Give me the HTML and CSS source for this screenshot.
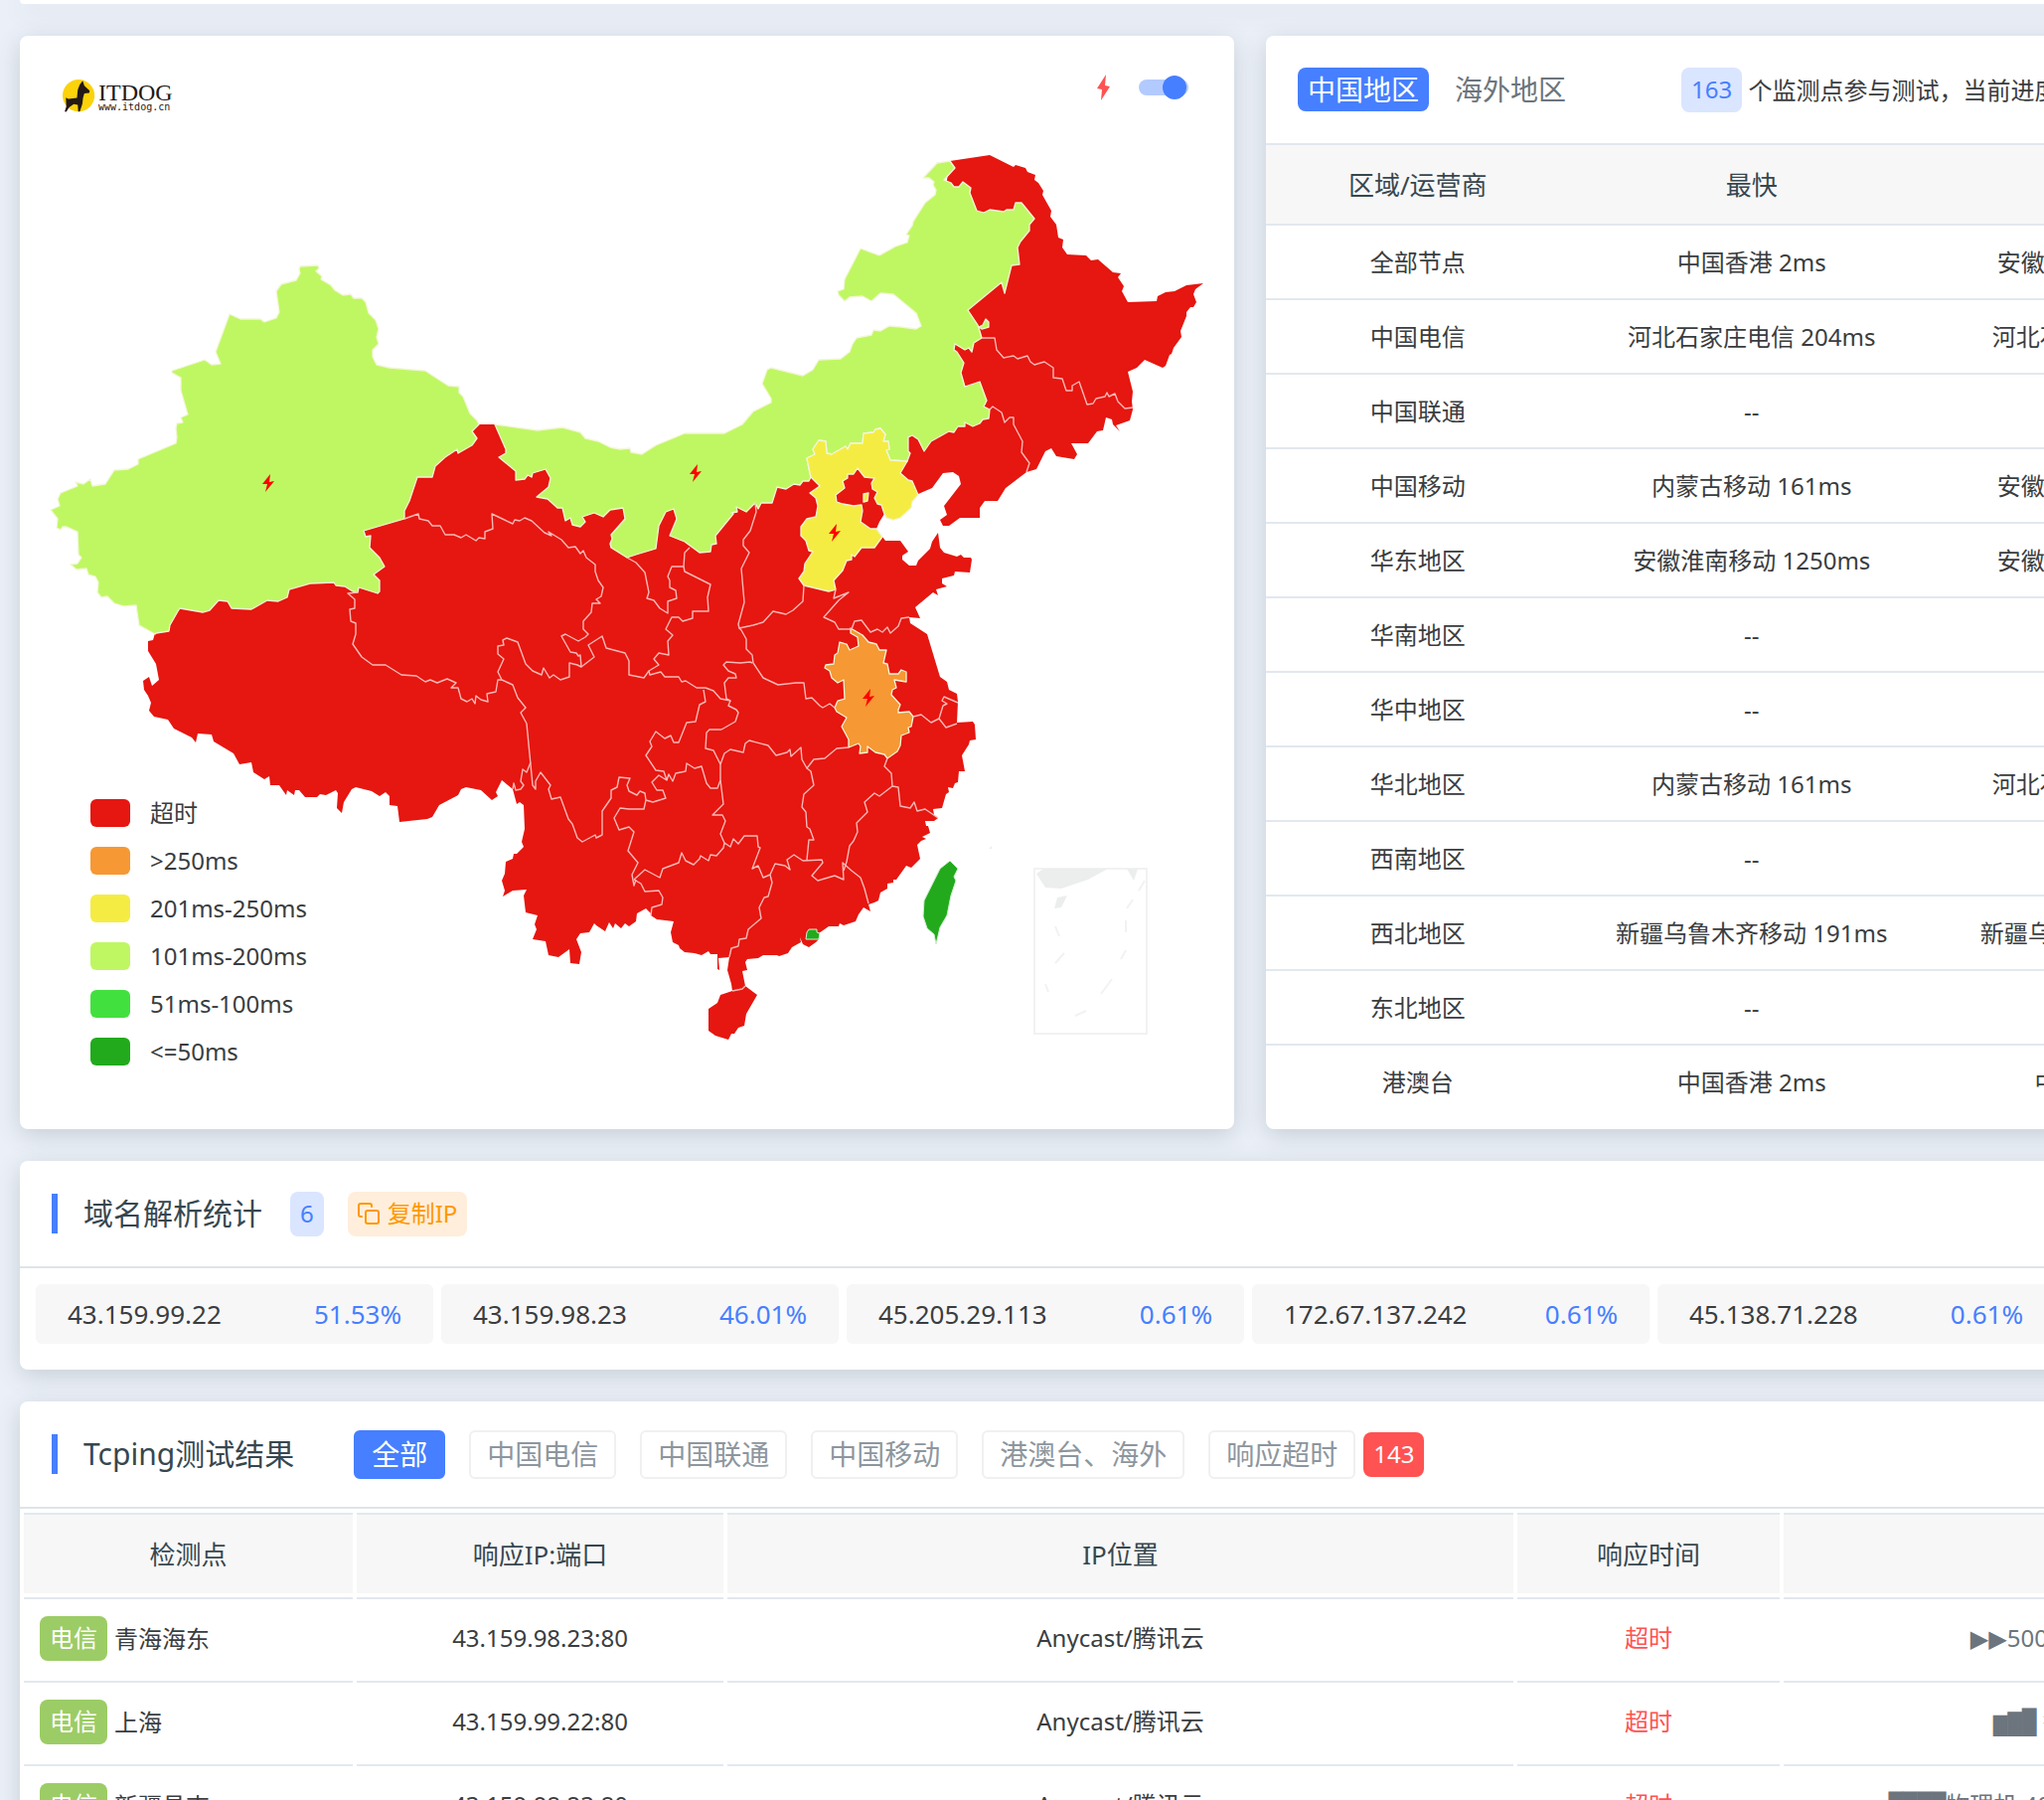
FILE: index.html
```html
<!DOCTYPE html>
<html lang="zh-CN">
  <head>
    <meta charset="UTF-8" />
    <meta name="viewport" content="width=device-width, initial-scale=1.0" />
    <title>Tcping测试 - ITDOG</title>
    <link rel="stylesheet" href="styles.css">
  </head>
  <body>
    <main class="page">
      <section class="card card-top"></section>

      <div class="overview">
        <section class="card map-card">
          <header class="map-head">
            <div class="logo">
              <svg class="logo-icon" viewBox="0 0 80 80">
                <circle cx="39" cy="39" r="39" fill="#fcd20a" />
                <path fill="#231815" d="M49 3 53 15 66 27 65 33 53 34 50 44 48 60 42 78 38 78 37 62 27 60 16 68 9 79 5 78 9 66 8 44 14 47 35 45 37 25 42 12z" />
              </svg>
              <div class="logo-text">
                <span class="logo-name">ITDOG</span>
                <span class="logo-url">www.itdog.cn</span>
              </div>
            </div>
            <label class="flash-switch">
              <svg class="flash-icon" viewBox="0 0 14 26"><path fill="#ff5252" d="M9 0 0 14 5 15 4 26 13 12 8 11z" /></svg>
              <input type="checkbox" aria-label="闪电" checked />
            </label>
          </header>

          <svg class="map" viewBox="20 136 1222 1000" role="img" aria-label="中国地区响应时间">
            <defs>
              <path id="bolt" fill="#ff0000" d="M2-9-6 1-1 1-3 9 6-2 1-1z" />
            </defs>

            <path class="p-red" d="M482 427 498 427 640 500 760 460 830 420 900 380 950 330 950 200 956 162 996 156 1020 168 1022 166 1032 169 1034 173 1042 176 1041 181 1045 184 1050 192 1049 196 1058 212 1057 218 1063 226 1065 239 1070 241 1069 249 1074 256 1093 257 1098 262 1105 261 1120 274 1128 275 1125 279 1131 288 1129 293 1135 304 1164 303 1165 298 1173 294 1182 293 1194 287 1211 285 1203 291 1201 296 1204 304 1201 309 1198 309 1194 314 1194 318 1188 333 1189 339 1181 350 1179 356 1177 357 1173 368 1170 370 1152 362 1144 370 1135 374 1140 394 1139 404 1140 412 1137 423 1123 428 1127 434 1120 427 1119 422 1113 420 1110 433 1104 434 1095 446 1078 446 1084 457 1081 462 1063 459 1058 451 1052 454 1043 472 1033 475 1012 491 1004 504 991 504 986 511 986 521 966 521 955 529 949 529 946 523 953 518 950 509 967 487 965 479 959 475 949 476 938 491 924 497 918 505 917 511 906 521 899 523 892 521 890 517 885 525 882 532 888 540 891 544 906 544 914 555 908 559 908 563 915 569 922 569 924 564 936 552 938 545 944 536 946 551 950 556 963 560 967 558 970 561 977 561 978 563 976 576 961 575 960 579 948 582 948 587 953 590 942 593 944 599 939 596 921 611 926 622 915 621 916 627 933 638 946 681 953 686 955 694 963 698 964 706 963 727 979 726 981 729 982 744 976 745 975 749 968 760 971 776 965 776 964 787 961 788 959 793 954 792 955 797 952 799 948 813 939 814 940 820 944 823 940 826 931 826 932 831 934 831 936 838 928 842 932 844 927 846 923 850 926 864 917 873 912 871 902 885 899 885 899 888 893 889 893 894 886 898 884 906 880 908 874 910 876 917 869 913 864 920 861 927 849 931 845 929 844 932 834 932 824 939 824 945 821 948 814 953 808 950 805 943 806 948 797 953 793 959 784 962 782 961 768 961 763 964 752 965 750 968 752 976 747 977 750 992 762 1001 751 1020 749 1032 743 1034 739 1040 736 1040 733 1046 720 1042 713 1037 713 1015 722 1009 725 1001 737 997 736 990 732 976 734 963 723 964 724 976 722 975 722 960 715 960 713 957 706 961 699 959 689 958 684 954 683 951 677 948 675 938 678 927 661 925 655 921 655 919 650 914 641 919 640 927 633 932 629 929 625 934 619 929 617 934 613 928 609 937 600 931 598 929 593 938 584 939 580 945 585 958 583 970 574 969 573 955 562 963 552 961 549 947 536 945 540 935 538 930 541 921 529 918 527 901 530 895 516 896 506 902 508 896 505 886 508 879 509 867 516 864 517 859 520 859 527 852 525 847 528 834 527 810 523 807 520 809 516 794 505 785 499 797 501 801 495 805 484 795 469 792 464 794 461 800 442 810 435 822 430 824 402 827 400 811 392 810 392 801 388 797 382 801 374 796 358 792 354 794 346 807 344 818 339 813 340 798 338 795 328 800 322 799 319 802 307 802 301 795 297 795 296 800 289 795 288 800 281 790 272 790 271 781 266 784 255 777 253 767 241 769 235 758 215 746 213 739 199 738 197 747 193 742 175 733 169 724 155 721 150 715 152 707 149 700 145 694 144 685 150 681 153 690 160 684 157 668 149 655 149 645 154 644 156 637 180 580 340 560 400 480 460 420z" />

            <!-- 新疆 -->
            <path class="p-lime" d="M482 427 480 423 473 416 466 399 462 395 462 389 451 388 428 373 392 370 379 367 375 359 375 352 381 346 379 339 381 331 378 322 371 315 368 304 364 300 356 300 353 296 345 297 337 292 333 287 323 281 324 278 318 273 321 270 320 267 302 268 301 271 302 275 298 282 283 286 278 293 281 314 278 320 266 324 262 321 242 321 231 316 217 354 222 366 213 367 206 362 173 373 173 375 182 380 182 393 189 417 182 420 184 425 178 426 177 431 178 440 177 446 139 462 139 467 129 472 115 473 106 487 93 489 91 482 84 487 76 485 78 489 61 496 58 502 60 509 51 513 58 522 57 531 61 533 63 530 67 530 78 535 79 558 82 561 78 567 71 568 77 573 87 572 89 578 96 580 99 586 98 596 102 601 108 600 115 607 125 610 137 609 140 629 156 638 157 637 170 635 171 629 179 615 181 612 204 616 211 614 220 604 229 605 233 612 253 613 269 604 280 605 289 601 291 593 312 587 336 586 338 589 347 590 355 595 360 596 361 591 380 597 382 595 382 584 376 578 387 570 382 561 372 551 373 539 368 540 366 534 407 522 407 514 412 504 420 480 435 480 438 469 448 460 460 452 461 456 475 448 480 441 475 434z" />

            <!-- 内蒙古 -->
            <path class="p-lime" d="M498 427 541 433 566 430 584 435 589 441 602 444 614 450 624 452 634 451 635 455 646 457 660 448 689 436 729 436 747 427 758 414 776 405 776 401 767 386 772 372 776 370 808 378 818 372 824 362 846 361 855 354 858 346 862 340 877 337 879 332 886 333 895 328 907 329 922 331 927 328 922 315 899 296 886 295 877 303 868 298 855 299 850 303 844 297 843 293 849 291 850 281 866 250 885 257 901 248 913 244 915 237 912 236 918 227 919 223 931 204 941 196 942 191 939 186 940 183 935 179 929 179 943 164 956 162 961 169 950 181 957 184 960 188 965 188 969 183 977 189 976 194 983 212 990 214 996 211 1010 213 1013 211 1020 211 1022 204 1028 204 1041 220 1036 226 1036 232 1027 243 1024 249 1026 266 1018 267 1011 295 1008 284 974 312 984 327 986 333 988 340 980 345 978 354 975 350 971 352 961 346 960 352 963 354 970 365 967 375 971 389 986 384 993 403 990 409 996 412 995 421 989 422 986 426 979 429 971 425 971 429 964 429 960 435 955 434 937 444 930 454 924 442 918 438 914 440 914 454 916 456 913 464 896 463 892 453 895 452 894 444 889 444 891 437 886 431 881 432 879 435 869 436 868 446 856 446 853 452 851 449 837 457 832 456 831 444 824 443 818 452 820 457 812 461 814 471 816 480 814 484 808 484 805 488 799 487 791 492 782 490 777 506 766 506 763 512 760 506 751 515 741 510 742 515 736 516 738 517 720 539 721 547 716 548 715 555 704 556 689 545 674 539 681 522 678 512 670 515 663 529 660 552 640 558 631 561 615 551 614 547 616 542 615 538 629 522 627 511 614 513 607 520 598 516 586 520 589 525 584 530 576 528 574 521 569 524 566 511 561 511 551 502 540 500 552 490 554 481 549 472 536 476 535 480 531 478 528 482 519 483 519 474 502 460 509 456 509 452z" />
            <path class="p-lime" d="M985 329 989 327 992 321 995 324 995 329 988 331z" />

            <!-- 河北 -->
            <path class="p-yellow" d="M913 464 906 476 914 483 918 484 924 498 918 505 917 511 906 521 899 523 892 521 890 517 887 508 883 507 880 501 883 495 878 492 877 486 880 481 870 480 863 471 859 477 853 477 853 481 848 484 850 491 841 498 842 505 848 507 859 509 867 508 868 514 866 525 876 532 882 532 888 540 880 551 867 551 860 560 857 558 857 563 852 564 848 574 839 584 841 593 834 595 809 589 804 582 809 575 810 567 818 555 814 554 811 544 806 539 806 530 812 522 821 520 823 509 821 501 815 496 825 489 819 483 816 480 814 471 812 461 820 457 818 452 824 443 831 444 832 456 837 457 851 449 853 452 856 446 868 446 869 436 879 435 881 432 886 431 891 437 889 444 894 444 895 452 892 453 896 463z" />
            <path class="p-yellow" d="M869 497 874 496 873 504 869 505z" />

            <!-- 安徽 -->
            <path class="p-orange" d="M856 632 868 639 874 646 882 648 885 654 892 654 889 667 893 668 895 678 904 678 907 674 912 676 912 686 900 684 902 692 898 694 897 699 906 709 904 714 904 717 915 716 919 721 917 731 914 732 915 737 907 740 906 750 903 756 893 763 890 759 881 757 873 751 873 757 865 758 866 751 864 748 854 752 854 744 847 731 852 722 842 716 840 712 843 705 850 703 849 684 843 687 837 682 835 675 830 672 831 669 839 668 840 659 843 657 845 646 852 648 855 654 864 650 863 641 856 637z" />

            <!-- 香港、台湾 -->
            <path class="p-green" d="M814 935 822 935 822 938 825 939 824 945 811 945 812 938z" />
            <path class="p-green" d="M956 866 964 874 960 882 962 886 957 901 953 921 946 933 942 950 940 940 933 934 929 922 930 906 946 874z" />

            <g class="borders">
              <path d="M407 522 421 517 422 522 431 524 435 529 443 529 448 538 457 538 464 541 469 538 479 544 482 541 488 542 488 535 496 532 495 517 516 527 518 523 523 524 528 521 535 524 548 536 555 539 552 535 565 543 572 551 579 550 584 557 587 554 590 561 599 568 599 575 602 584 607 591 605 600 600 603 604 607 596 607 595 616 587 625 587 633 592 638 589 641 582 645 569 638 565 640 574 656 580 657 582 660 584 659 585 671 598 661 592 649 606 640 610 652 629 657 633 665 633 679 648 682 653 675" />
              <path d="M585 671 581 669 573 667 573 681 564 684 557 679 553 682 547 672 545 679 536 675 529 668 521 646 510 642 506 644 507 649 501 650 501 658 507 663 501 676 505 684 516 689 521 702 529 712 524 717 530 728 536 790 539 794 539 786 544 777 554 790 552 794 555 804 564 802 572 824 576 829 581 843 586 847 599 840 600 843 606 840 606 816 615 803 615 795 621 792 623 782 634 783 631 790 633 796 641 800 644 796 649 798 650 805 648 814 633 814 624 813 618 823 623 835 633 832 638 837 632 856 642 868 636 880 638 891 640 885" />
              <path d="M638 885 649 875 664 883 667 874 683 868 686 858 690 866 698 870 704 864 705 861 713 866 715 860 721 861 728 853 729 848 735 852 738 844 743 849 749 841 762 841 763 852 765 853 757 874 763 871 768 883 775 880 780 869 790 871 795 875 792 865 799 860 808 866 827 865 828 868 817 881 823 886 840 881 849 885 848 868 857 876 866 883 870 894 874 909" />
              <path d="M775 880 777 888 773 902 769 903 764 913 766 924 753 935 751 944 744 945 743 952 736 954 734 963" />
              <path d="M737 997 747 995 750 992" />
              <path d="M638 885 645 889 649 897 663 896 667 903 666 910 656 913 655 921" />
              <path d="M360 596 350 597 357 603 357 612 352 613 353 625 358 627 358 638 355 648 364 661 375 669 388 669 404 679 419 680 428 686 433 684 440 687 450 683 459 687 454 692 461 692 464 703 470 706 475 703 478 708 479 700 484 704 491 706 490 698 499 696 501 684 505 684" />
              <path d="M534 767 530 777 526 774 524 786 527 790 524 794 519 795 517 788 516 794" />
              <path d="M631 561 640 566 649 576 653 596 651 602 658 604 664 612 672 617 672 605 681 602 680 594 674 591 674 584 672 580 676 570 688 570 689 556 694 551" />
              <path d="M688 570 689 575 715 588 712 601 713 615 697 615 697 622 687 625 683 621 676 621 670 633 677 639 672 645 673 659 663 657 658 663 663 669 653 675 654 679 665 676 669 681 683 681 686 686 690 685 701 692 710 692 718 695 725 703 735 705 731 703 729 687 733 682 741 682 740 678 733 675 728 669 731 666 745 667 755 666 757 667" />
              <path d="M760 506 761 515 755 534 748 543 748 549 754 556 746 572 749 606 743 628 744 632 758 629 768 626 778 615 791 618 798 614 808 605 809 589" />
              <path d="M744 632 746 634 751 643 751 653 757 659 758 667 768 682 783 689 801 687 809 687 811 703 817 702 825 710 828 712 835 708 840 712" />
              <path d="M841 593 839 602 854 596 844 604 829 621 840 626 844 633 857 633 860 625 867 624 876 636 883 633 888 636 893 631 896 637 904 630 907 622 915 621" />
              <path d="M708 694 710 706 704 709 700 726 691 727 683 747 678 747 675 740 669 743 660 736 654 746 656 751 650 760 660 775 668 776 671 785 663 780 656 787 661 795 667 795 670 803 657 807 650 805" />
              <path d="M671 785 673 779 677 786 680 778 690 776 691 768 699 773 706 771 711 788 715 793 722 793 725 785 725 769 718 755 710 753 711 737 714 734 726 734 740 726 743 717 741 714 733 710 735 705" />
              <path d="M725 769 729 758 735 754 748 757 750 748 754 745 773 750 781 760 792 757 795 754 796 761 806 752 807 764 812 773 819 764 830 763 842 753 854 752" />
              <path d="M812 773 816 776 819 790 809 799 807 812 811 817 812 832 815 834 819 845 814 845 812 865" />
              <path d="M725 785 728 809 717 820 727 820 730 826 725 839 729 848" />
              <path d="M893 763 890 771 897 778 898 791 885 801 880 798 870 807 873 817 862 828 863 837 859 846 855 851 852 867 849 876" />
              <path d="M898 791 904 792 906 811 916 813 920 807 923 816 931 814 944 823" />
              <path d="M919 721 927 719 937 727 945 723 952 732 963 728M945 723 949 710 953 708 948 705 950 701 964 707" />
              <path d="M988 340 1001 340 1003 352 1010 360 1020 358 1024 361 1034 358 1037 364 1041 367 1051 364 1060 370 1060 380 1069 381 1073 393 1079 393 1079 388 1086 384 1094 407 1100 406 1103 401 1112 399 1114 395 1116 399 1122 396 1125 404 1132 411 1140 410" />
              <path d="M996 412 999 409 1008 415 1011 425 1016 420 1020 420 1020 427 1029 444 1028 455 1036 466 1033 475" />
            </g>

            <!-- 南海诸岛 -->
            <g class="islands">
              <rect x="1041" y="874" width="113" height="166" />
              <path class="isle" d="M1043 879 1050 874 1115 874 1095 885 1068 894 1052 893zM1134 874 1145 874 1141 886zM1064 903 1074 901 1068 913 1061 914zM995 854 998 851 998 854z" />
              <path d="M1152 886 1146 896M1140 905 1134 914M1133 926V938M1133 956 1128 965M1119 985 1108 1000M1093 1017 1082 1022M1052 990 1055 998M1071 959 1062 969M1062 932 1066 942" />
            </g>

            <use href="#bolt" x="270" y="486" />
            <use href="#bolt" x="700" y="476" />
            <use href="#bolt" x="840" y="536" />
            <use href="#bolt" x="874" y="702" />
          </svg>

          <ul class="legend">
            <li><i class="swatch c-red"></i>超时</li>
            <li><i class="swatch c-orange"></i>&gt;250ms</li>
            <li><i class="swatch c-yellow"></i>201ms-250ms</li>
            <li><i class="swatch c-lime"></i>101ms-200ms</li>
            <li><i class="swatch c-light"></i>51ms-100ms</li>
            <li><i class="swatch c-green"></i>&lt;=50ms</li>
          </ul>
        </section>

        <section class="card region-card">
          <header class="region-head">
            <button class="region-tab active" type="button">中国地区</button>
            <button class="region-tab" type="button">海外地区</button>
            <p class="progress"><span class="badge badge-blue">163</span> 个监测点参与测试，当前进度：100%</p>
          </header>
          <table class="region-table">
            <thead>
              <tr><th class="w-area">区域/运营商</th><th class="w-node">最快</th><th class="w-node">最慢</th><th>平均</th></tr>
            </thead>
            <tbody>
              <tr><td>全部节点</td><td>中国香港 2ms</td><td>安徽淮南移动 1250ms</td><td>208ms</td></tr>
              <tr><td>中国电信</td><td>河北石家庄电信 204ms</td><td>河北石家庄电信 204ms</td><td>204ms</td></tr>
              <tr><td>中国联通</td><td>--</td><td>--</td><td>--</td></tr>
              <tr><td>中国移动</td><td>内蒙古移动 161ms</td><td>安徽淮南移动 1250ms</td><td>534ms</td></tr>
              <tr><td>华东地区</td><td>安徽淮南移动 1250ms</td><td>安徽淮南移动 1250ms</td><td>1250ms</td></tr>
              <tr><td>华南地区</td><td>--</td><td>--</td><td>--</td></tr>
              <tr><td>华中地区</td><td>--</td><td>--</td><td>--</td></tr>
              <tr><td>华北地区</td><td>内蒙古移动 161ms</td><td>河北石家庄电信 204ms</td><td>182ms</td></tr>
              <tr><td>西南地区</td><td>--</td><td>--</td><td>--</td></tr>
              <tr><td>西北地区</td><td>新疆乌鲁木齐移动 191ms</td><td>新疆乌鲁木齐移动 191ms</td><td>191ms</td></tr>
              <tr><td>东北地区</td><td>--</td><td>--</td><td>--</td></tr>
              <tr><td>港澳台</td><td>中国香港 2ms</td><td>中国台湾 35ms</td><td>12ms</td></tr>
            </tbody>
          </table>
        </section>
      </div>

      <section class="card">
        <header class="card-head">
          <h2>域名解析统计</h2>
          <span class="badge badge-blue">6</span>
          <button class="badge badge-orange" type="button">
            <svg class="copy-icon" viewBox="0 0 22 22" fill="none" stroke="currentColor" stroke-width="2" stroke-linejoin="round" stroke-linecap="round">
              <rect x="8" y="8" width="13" height="13" rx="2" />
              <path d="M4 14H3Q1 14 1 12V3Q1 1 3 1H12Q14 1 14 3V4" />
            </svg>
            复制IP
          </button>
        </header>
        <div class="ip-list">
          <div class="ip-item"><span>43.159.99.22</span><span class="percent">51.53%</span></div>
          <div class="ip-item"><span>43.159.98.23</span><span class="percent">46.01%</span></div>
          <div class="ip-item"><span>45.205.29.113</span><span class="percent">0.61%</span></div>
          <div class="ip-item"><span>172.67.137.242</span><span class="percent">0.61%</span></div>
          <div class="ip-item"><span>45.138.71.228</span><span class="percent">0.61%</span></div>
          <div class="ip-item"><span>172.67.139.15</span><span class="percent">0.61%</span></div>
        </div>
      </section>

      <section class="card">
        <header class="card-head">
          <h2>Tcping测试结果</h2>
          <div class="filters">
            <button class="filter active" type="button">全部</button>
            <button class="filter" type="button">中国电信</button>
            <button class="filter" type="button">中国联通</button>
            <button class="filter" type="button">中国移动</button>
            <button class="filter" type="button">港澳台、海外</button>
            <button class="filter" type="button">响应超时</button>
          </div>
          <span class="badge badge-red">143</span>
        </header>
        <table class="result-table">
          <thead>
            <tr><th class="r-node">检测点</th><th class="r-ip">响应IP:端口</th><th class="r-place">IP位置</th><th class="r-time">响应时间</th><th>赞助商</th></tr>
          </thead>
          <tbody>
            <tr>
              <td class="node"><span class="badge badge-green">电信</span>青海海东</td>
              <td>43.159.98.23:80</td>
              <td>Anycast/腾讯云</td>
              <td class="timeout">超时</td>
              <td class="sponsor"><span class="arrows">▶▶</span>500G高防云服务器 99元起</td>
            </tr>
            <tr>
              <td class="node"><span class="badge badge-green">电信</span>上海</td>
              <td>43.159.99.22:80</td>
              <td>Anycast/腾讯云</td>
              <td class="timeout">超时</td>
              <td class="sponsor"><span class="blocks">▆▇█</span> 香港云服务器 29元起</td>
            </tr>
            <tr>
              <td class="node"><span class="badge badge-green">电信</span>新疆昌吉</td>
              <td>43.159.98.23:80</td>
              <td>Anycast/腾讯云</td>
              <td class="timeout">超时</td>
              <td class="sponsor"><span class="blocks">████</span>物理机 40核128G独享带宽香港美国机房</td>
            </tr>
          </tbody>
        </table>
      </section>
    </main>
  </body>
</html>
```
FILE: styles.css
```css
* {
  padding: 0;
  margin: 0;
  box-sizing: border-box;
}

html {
  overflow-x: hidden;
}

body {
  background: #ebf0f8;
  color: #3a3d40;
  font-family: "Noto Sans", "Noto Sans CJK SC", sans-serif;
  font-size: 24px;
  line-height: 32px;
}

button {
  border: 0;
  background: none;
  font: inherit;
  cursor: pointer;
}

table {
  width: 100%;
  table-layout: fixed;
  text-align: center;
}

th {
  background: #f7f7f7;
  color: #37474f;
  font-size: 26px;
  font-weight: normal;
}

.page {
  display: flex;
  flex-direction: column;
  gap: 32px;
  min-width: 2516px;
  padding: 0 20px 32px;
}

.card {
  background: #fff;
  border-radius: 8px;
  box-shadow: 0 6px 24px rgba(55, 71, 79, 0.2);
}

.card-top {
  height: 4px;
  border-radius: 0 0 8px 8px;
}

.overview {
  display: grid;
  grid-template-columns: 1fr 1fr;
  gap: 32px;
}

/* map */
.map-card {
  position: relative;
}

.map-head {
  display: flex;
  justify-content: space-between;
  align-items: flex-start;
  height: 100px;
  padding: 44px 46px 0 43px;
}

.logo {
  display: flex;
  gap: 3px;
  color: #231815;
}

.logo-icon {
  width: 33px;
  height: 33px;
}

.logo-text {
  display: flex;
  flex-direction: column;
}

.logo-name {
  font-family: "Liberation Serif", serif;
  font-size: 24px;
  line-height: 26px;
}

.logo-url {
  font-family: "DejaVu Sans Mono", monospace;
  font-size: 10px;
  line-height: 4px;
}

.flash-switch {
  display: flex;
  align-items: center;
  gap: 28px;
  height: 16px;
}

.flash-icon {
  width: 14px;
  height: 26px;
}

.flash-switch input {
  appearance: none;
  display: flex;
  justify-content: flex-end;
  align-items: center;
  width: 50px;
  height: 16px;
  padding-right: 2px;
  border-radius: 8px;
  background: #b3caff;
}

.flash-switch input::before {
  content: "";
  flex: none;
  width: 24px;
  height: 24px;
  border-radius: 50%;
  background: #467fff;
}

.map {
  display: block;
  width: 100%;
}

.p-red {
  fill: #e61610;
}

.p-lime,
.p-yellow,
.p-orange {
  stroke: #f4f6d8;
  stroke-width: 1.3;
  stroke-linejoin: round;
}

.p-lime {
  fill: #bff763;
}

.p-yellow {
  fill: #f5ec43;
}

.p-orange {
  fill: #f69833;
}

.p-green {
  fill: #22aa1c;
  stroke: #d3eed2;
}

.borders {
  fill: none;
  stroke: #fab9b6;
  stroke-width: 1.4;
  stroke-linejoin: round;
}

.islands {
  fill: none;
  stroke: #f1f2f2;
  stroke-width: 2;
}

.islands .isle {
  fill: #eceeee;
  stroke: none;
}

.legend {
  position: absolute;
  left: 71px;
  bottom: 54px;
  list-style: none;
}

.legend li {
  display: flex;
  align-items: center;
  gap: 20px;
  height: 48px;
}

.swatch {
  width: 40px;
  height: 28px;
  border-radius: 6px;
}

.c-red {
  background: #e61610;
}

.c-orange {
  background: #f69833;
}

.c-yellow {
  background: #f5ec43;
}

.c-lime {
  background: #bff763;
}

.c-light {
  background: #42e03e;
}

.c-green {
  background: #22aa1c;
}

/* badges */
.badge {
  display: inline-flex;
  align-items: center;
  gap: 8px;
  height: 45px;
  padding: 0 10px;
  border-radius: 8px;
}

.badge-blue {
  background: #dae5ff;
  color: #467fff;
}

.badge-orange {
  background: #ffeedb;
  color: #ff9800;
}

.badge-red {
  background: #ff5252;
  color: #fff;
}

.badge-green {
  margin-right: 7px;
  background: #9ccc65;
  color: #fff;
}

.copy-icon {
  width: 22px;
  height: 22px;
}

/* region table */
.region-card {
  padding-bottom: 11px;
}

.region-head {
  display: flex;
  align-items: center;
  gap: 16px;
  height: 108px;
  padding: 0 32px;
  white-space: nowrap;
}

.region-tab {
  height: 44px;
  padding: 0 10px;
  border-radius: 8px;
  color: #6c757d;
  font-size: 28px;
}

.region-tab.active {
  background: #467fff;
  color: #fff;
}

.progress {
  margin-left: 90px;
}

.region-table {
  border-spacing: 0;
}

.region-table th,
.region-table td {
  height: 75px;
  border-top: 2px solid #e2e8ee;
}

.region-table th {
  height: 81px;
}

.w-area {
  width: 25%;
}

.w-node {
  width: 30%;
}

/* card header */
.card-head {
  display: flex;
  align-items: center;
  gap: 24px;
  height: 108px;
  padding: 0 32px;
  border-bottom: 2px solid #dde4ea;
}

.card-head h2 {
  display: flex;
  align-items: center;
  gap: 26px;
  margin-right: 4px;
  color: #37474f;
  font-size: 30px;
  font-weight: normal;
}

.card-head h2::before {
  content: "";
  width: 6px;
  height: 40px;
  background: #467fff;
}

/* resolved addresses */
.ip-list {
  display: grid;
  grid-template-columns: repeat(6, 1fr);
  gap: 8px;
  padding: 16px 20px 26px 16px;
}

.ip-item {
  display: flex;
  justify-content: space-between;
  padding: 0 32px;
  border-radius: 6px;
  background: #f7f7f7;
  font-size: 26px;
  line-height: 60px;
}

.percent {
  color: #467fff;
}

/* results */
.filters {
  display: flex;
  gap: 24px;
  margin-left: 32px;
}

.filters + .badge {
  margin-left: -16px;
}

.filter {
  height: 49px;
  padding: 0 16px;
  border: 2px solid #f0f0f0;
  border-radius: 6px;
  color: #8d969e;
  font-size: 28px;
}

.filter.active {
  border-color: #467fff;
  background: #467fff;
  color: #fff;
}

.result-table {
  border-spacing: 4px;
}

.result-table th,
.result-table td {
  height: 80px;
  border-top: 2px solid #e2e8ee;
}

.result-table th {
  height: 81px;
}

.r-node {
  width: 331px;
}

.r-ip {
  width: 369px;
}

.r-place {
  width: 791px;
}

.r-time {
  width: 264px;
}

.result-table .node {
  padding-left: 16px;
  text-align: left;
}

.timeout {
  color: #ff5252;
}

.sponsor {
  color: #6c757d;
}

.arrows {
  font-family: "DejaVu Sans", sans-serif;
}

.blocks {
  font-family: "DejaVu Sans Mono", monospace;
}
```
